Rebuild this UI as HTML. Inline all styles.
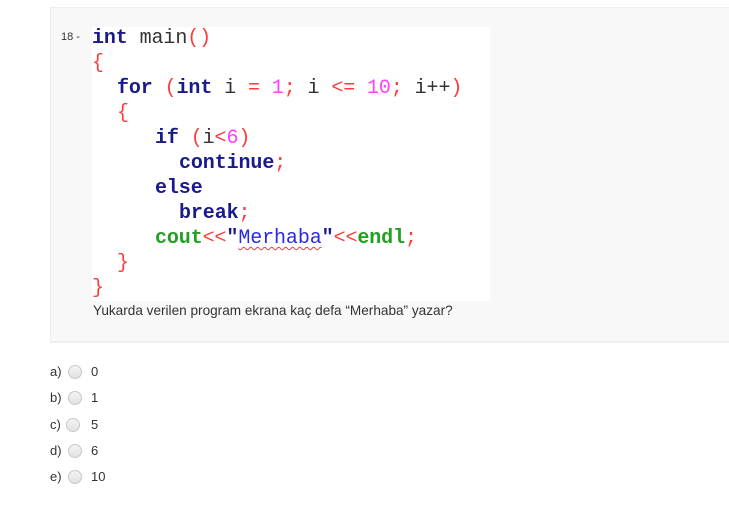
<!DOCTYPE html>
<html><head><meta charset="utf-8">
<style>
html,body{margin:0;padding:0;background:#fff;width:729px;height:507px;overflow:hidden;position:relative;font-family:"Liberation Sans",sans-serif;}
.box{position:absolute;left:50px;top:7px;width:679px;height:333px;background:#f8f8f8;border-top:1px solid #eee;border-left:1px solid #eee;border-bottom:2px solid #efefef;}
.code{position:absolute;left:92px;top:27px;width:398px;height:274px;background:#fff;}
.num{position:absolute;left:61px;top:31px;font-size:11px;color:#333;}
.l{position:absolute;font-family:"Liberation Mono",monospace;font-size:20px;font-weight:bold;line-height:25px;white-space:pre;letter-spacing:-0.1px;}
.k{color:#1a1a8c;}
.p{color:#ff3b3b;font-weight:normal;}
.n{color:#ff40ff;font-weight:normal;}
.i{color:#333;font-weight:normal;}
.g{color:#22a022;}
.s{color:#2a2ae0;font-weight:normal;text-decoration:underline wavy #e04040;text-decoration-thickness:1px;text-underline-offset:3px;}
.q{position:absolute;left:93px;top:303px;font-size:13.6px;color:#333;}
.opt{position:absolute;left:50px;font-size:13px;color:#333;height:16px;}
.opt .r{position:absolute;left:18px;top:1px;width:14px;height:14px;box-sizing:border-box;border-radius:50%;border:1px solid #c8c8c8;background:linear-gradient(#f4f4f4,#e2e2e2);}
.opt .v{position:absolute;left:41px;top:0;}
</style></head><body>
<div class="box"></div>
<div class="code"></div>
<div class="num">18 -</div>
<div class="l" style="left:92px;top:26px"><span class="k">int</span> <span class="i">main</span><span class="p">()</span></div>
<div class="l" style="left:92px;top:51px"><span class="p">{</span></div>
<div class="l" style="left:117px;top:76px"><span class="k">for</span> <span class="p">(</span><span class="k">int</span> <span class="i">i</span> <span class="p">=</span> <span class="n">1</span><span class="p">;</span> <span class="i">i</span> <span class="p">&lt;=</span> <span class="n">10</span><span class="p">;</span> <span class="i">i++</span><span class="p">)</span></div>
<div class="l" style="left:117px;top:101px"><span class="p">{</span></div>
<div class="l" style="left:155px;top:126px"><span class="k">if</span> <span class="p">(</span><span class="i">i</span><span class="p">&lt;</span><span class="n">6</span><span class="p">)</span></div>
<div class="l" style="left:179px;top:151px"><span class="k">continue</span><span class="p">;</span></div>
<div class="l" style="left:155px;top:176px"><span class="k">else</span></div>
<div class="l" style="left:179px;top:201px"><span class="k">break</span><span class="p">;</span></div>
<div class="l" style="left:155px;top:226px"><span class="g">cout</span><span class="p">&lt;&lt;</span><span class="k">"</span><span class="s">Merhaba</span><span class="k">"</span><span class="p">&lt;&lt;</span><span class="g">endl</span><span class="p">;</span></div>
<div class="l" style="left:117px;top:251px"><span class="p">}</span></div>
<div class="l" style="left:92px;top:276px"><span class="p">}</span></div>
<div class="q">Yukarda verilen program ekrana kaç defa “Merhaba” yazar?</div>
<div class="opt" style="top:364px">a)<span class="r"></span><span class="v">0</span></div>
<div class="opt" style="top:390px">b)<span class="r"></span><span class="v">1</span></div>
<div class="opt" style="top:417px">c)<span class="r" style="left:16px"></span><span class="v">5</span></div>
<div class="opt" style="top:443px">d)<span class="r"></span><span class="v">6</span></div>
<div class="opt" style="top:469px">e)<span class="r"></span><span class="v">10</span></div>
</body></html>
